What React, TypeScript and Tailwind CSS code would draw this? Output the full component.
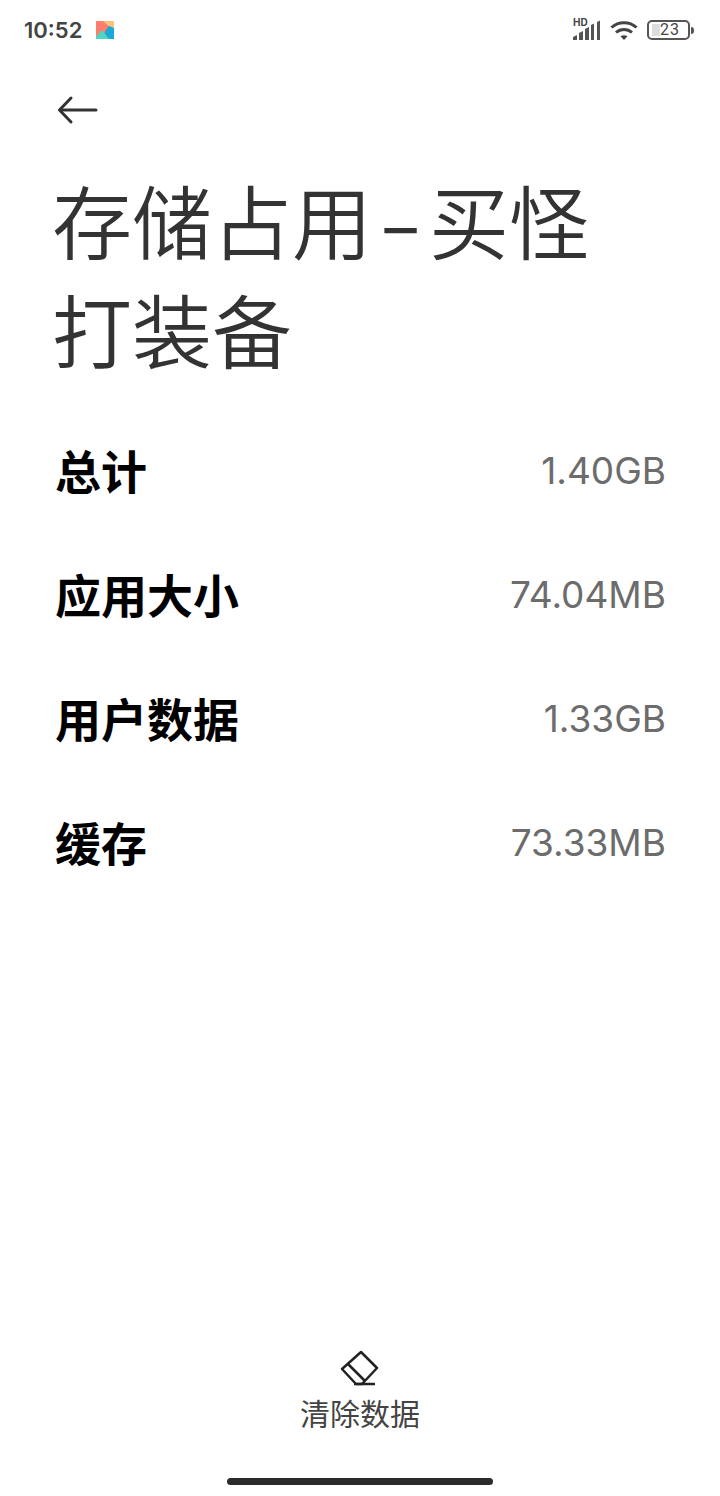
import React from 'react';

const cjk = '[font-family:"Noto_Sans_CJK_SC","Noto_Sans",sans-serif]';

const rows = [
  { label: '总计', value: '1.40GB' },
  { label: '应用大小', value: '74.04MB' },
  { label: '用户数据', value: '1.33GB' },
  { label: '缓存', value: '73.33MB' },
];

const SignalIcon = () => (
  <svg width="28" height="20" viewBox="0 0 28 20" className="text-[#555555]">
    <path d="M0 20v-3l4-2v5zM6 20v-7l4-2v9zM12 20V9l4-2v13zM18 20V5l3-1.500V20zM24 20V2l3-1.500V20z" fill="currentColor" />
  </svg>
);

const WifiIcon = () => (
  <svg width="28" height="20" viewBox="0 0 28 20" fill="none" stroke="#444444" strokeWidth="3">
    <path d="M1.500 7.500C8.500 1 19.500 1 26.500 7.500" />
    <path d="M6 12.500c4.500-4 11.500-4 16 0" />
    <path d="M14 20l-3.500-3.700c2-1.500 5-1.500 7 0z" fill="#444444" stroke="none" />
  </svg>
);

export default function App() {
  return (
    <div className={`w-[720px] h-[1496px] bg-white flex flex-col ${cjk}`}>
      {/* Status bar */}
      <div className="h-[60px] pl-6 pr-[25px] flex items-center justify-between">
        <div className="flex items-center gap-[14px]">
          <span className="text-[22px] font-semibold text-[#444444] [font-family:Inter,sans-serif] leading-none">10:52</span>
          <svg width="18" height="18" viewBox="0 0 18 18">
            <rect width="18" height="18" fill="#ffc27a" />
            <path d="M0 0h7l11 10v8H0z" fill="#ff7f6e" />
            <path d="M18 7v11H6l4-9 3-4z" fill="#19a9d6" />
            <path d="M0 18v-2l6-7 7 9z" fill="#4fd6c2" />
          </svg>
        </div>
        <div className="flex items-center gap-[9px] relative -translate-x-[1px]">
          <span className="absolute left-0 top-[-3px] text-[10px] font-bold text-[#444444] [font-family:Inter,sans-serif] leading-none">HD</span>
          <SignalIcon />
          <WifiIcon />
          <div className="flex items-center gap-[1px]">
            <div className="w-[43px] h-[20px] rounded-[5px] border-2 border-[#555555] relative flex items-center justify-center overflow-hidden pl-[3px]">
              <div className="absolute left-[3px] top-[2px] bottom-[2px] w-[8px] bg-[#dddddd]" />
              <span className="relative text-[16px] tracking-[1px] text-[#444444] [font-family:Roboto,sans-serif] leading-none">23</span>
            </div>
            <div className="w-[3px] h-[7px] rounded-r-sm bg-[#555555]" />
          </div>
        </div>
      </div>

      {/* Back */}
      <div className="pl-[57px] pt-[34px]">
        <svg width="42" height="32" viewBox="0 0 42 32" fill="none" stroke="#333333" strokeWidth="3" strokeLinecap="round" strokeLinejoin="round">
          <path d="M39 16H3" />
          <path d="M14 4L2.500 16 14 28" />
        </svg>
      </div>

      {/* Title */}
      <h1 className="pl-[52px] pr-[110px] mt-[38px] text-[80px] leading-[109px] font-[350] text-[#333333]">
        存储占用<span className="inline-block w-[33px] mx-[12px] text-center scale-x-[1.6]">-</span>买怪<br />打装备
      </h1>

      {/* Sizes */}
      <div className="mt-[26px] pl-[55px] pr-[54px] flex flex-col">
        {rows.map((row) => (
          <div key={row.label} className="h-[124px] flex items-center justify-between">
            <span className="text-[46px] font-bold text-black leading-none pb-[2px]">{row.label}</span>
            <span className="text-[37px] text-[#6c6c6c] [font-family:Inter,sans-serif] leading-none">{row.value}</span>
          </div>
        ))}
      </div>

      {/* Clear action */}
      <div className="mt-auto flex flex-col items-center">
        <svg width="40" height="36" viewBox="0 0 40 36" fill="none" stroke="#222222" strokeWidth="2.500" strokeLinejoin="round">
          <path d="M21 2L37 18 22 34H16L2 19z" />
          <path d="M8 14l17 17" />
          <path d="M14 34h21" />
        </svg>
        <span className="mt-[6px] text-[30px] leading-[40px] text-[#444444]">清除数据</span>
      </div>

      {/* Home indicator */}
      <div className="h-[64px] flex items-end justify-center pb-[11px]">
        <div className="w-[266px] h-[7px] rounded-full bg-[#2b2b2b]" />
      </div>
    </div>
  );
}
